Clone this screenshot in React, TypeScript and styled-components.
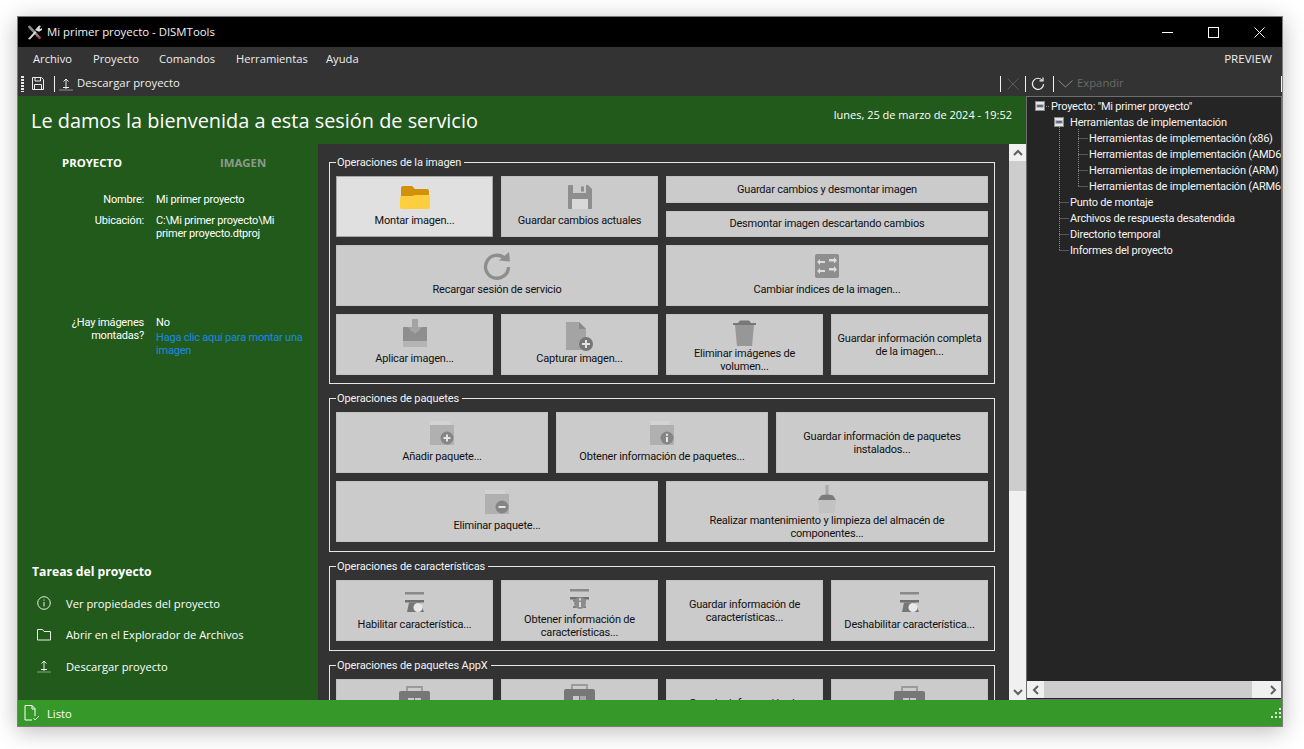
import styled, { createGlobalStyle } from "styled-components";
import { ReactNode } from "react";

const Global = createGlobalStyle`
  html, body {
    margin: 0;
    padding: 0;
    background: #ffffff;
    overflow: hidden;
  }
  * { box-sizing: border-box; }
`;

const UI_FONT = `"Open Sans", "Noto Sans", "Liberation Sans", sans-serif`;
const SMALL_FONT = `font-family: Roboto, "Liberation Sans", sans-serif; font-size: 11px; letter-spacing: -0.2px;`;

const Desktop = styled.div`
  width: 1304px;
  height: 749px;
  padding: 16px 21px 22px 17px;
  font-family: ${UI_FONT};
  font-size: 11.2px;
`;

const Window = styled.div`
  width: 1266px;
  height: 711px;
  border: 1px solid #7c7c7c;
  display: flex;
  flex-direction: column;
  box-shadow: 0 4px 22px rgba(0, 0, 0, 0.28);
  background: #333;
`;

const TitleBar = styled.div`
  height: 30px;
  background: #000;
  color: #f2f2f2;
  display: flex;
  align-items: center;
  padding-left: 9px;
  flex-shrink: 0;
`;

const WindowTitle = styled.span`
  margin: 0 0 2px 5px;
  flex: 1;
  font-size: 11.4px;
`;

const WindowButton = styled.div`
  width: 46px;
  height: 30px;
  display: flex;
  align-items: center;
  justify-content: center;
`;

const MenuBar = styled.div`
  height: 24px;
  background: #333;
  color: #eee;
  display: flex;
  align-items: center;
  padding: 0 10px 2px 15px;
  flex-shrink: 0;
`;

const MenuItem = styled.span<{ $w: number }>`
  width: ${(p) => p.$w}px;
`;

const Preview = styled.span`
  margin-left: auto;
  font-size: 11.6px;
`;

const ToolBar = styled.div`
  height: 25px;
  background: #333;
  color: #eee;
  display: flex;
  align-items: center;
  flex-shrink: 0;
`;

const ToolSection = styled.div<{ $w?: number }>`
  display: flex;
  align-items: center;
  padding-left: ${(p) => (p.$w ? 3 : 0)}px;
  width: ${(p) => (p.$w ? `${p.$w}px` : "auto")};
  flex: ${(p) => (p.$w ? "none" : 1)};
`;

const Grip = styled.div`
  width: 3px;
  height: 16px;
  background: repeating-linear-gradient(#e8e8e8 0 2px, transparent 2px 3px);
  margin-right: 8px;
`;

const ToolSep = styled.div<{ $l?: number; $r?: number }>`
  width: 1px;
  height: 16px;
  background: #f0f0f0;
  margin: 0 ${(p) => p.$r ?? 5}px 0 ${(p) => p.$l ?? 5}px;
`;

const ToolIcon = styled.div<{ $w?: number }>`
  display: flex;
  align-items: center;
  justify-content: center;
  width: ${(p) => p.$w ?? 14}px;
  height: 16px;
`;

const ToolText = styled.span<{ $off?: boolean }>`
  margin: 0 0 2px 4px;
  font-size: 11.3px;
  color: ${(p) => (p.$off ? "#6a6a6a" : "#eee")};
`;

const ToolSpring = styled.div`
  flex: 1;
`;

const Main = styled.div`
  flex: 1;
  display: flex;
  min-height: 0;
`;

const GreenArea = styled.div`
  width: 1008px;
  flex-shrink: 0;
  background: #215a1b;
  color: #fff;
  display: flex;
  flex-direction: column;
`;

const Header = styled.div`
  height: 48px;
  display: flex;
  justify-content: space-between;
  padding: 0 14px 0 13px;
  flex-shrink: 0;
`;

const Welcome = styled.h1`
  margin: 12px 0 0;
  font-size: 19.9px;
  font-weight: 400;
  line-height: 26px;
`;

const DateText = styled.div`
  margin-top: 11px;
  line-height: 15px;
  font-size: 11px;
`;

const Columns = styled.div`
  flex: 1;
  display: flex;
  min-height: 0;
`;

const LeftPane = styled.div`
  width: 300px;
  flex-shrink: 0;
  display: flex;
  flex-direction: column;
  padding-top: 11px;
`;

const Tabs = styled.div`
  display: flex;
  height: 15px;
  line-height: 15px;
  font-weight: 700;
  font-size: 11.4px;
`;

const Tab = styled.div<{ $off?: boolean; $w: number }>`
  width: ${(p) => p.$w}px;
  text-align: center;
  white-space: nowrap;
  color: ${(p) => (p.$off ? "#8d9a8a" : "#fff")};
  margin-left: ${(p) => (p.$off ? 98 : 44)}px;
`;

const InfoGrid = styled.div`
  ${SMALL_FONT}
  display: grid;
  grid-template-columns: 126px 164px;
  column-gap: 12px;
  line-height: 13px;
  margin-top: 23px;
`;

const InfoLabel = styled.div<{ $gap?: number }>`
  text-align: right;
  margin-top: ${(p) => p.$gap ?? 0}px;
`;

const InfoValue = styled.div<{ $gap?: number }>`
  margin-top: ${(p) => p.$gap ?? 0}px;
`;

const InfoLink = styled.a`
  display: block;
  color: #1e88e5;
  margin-top: 2px;
`;

const Tasks = styled.div`
  margin-top: auto;
  padding: 0 0 18px 14px;
`;

const TasksTitle = styled.div`
  font-weight: 700;
  font-size: 12.2px;
  line-height: 15px;
  margin-bottom: 9px;
`;

const TaskRow = styled.div`
  display: flex;
  align-items: center;
  height: 31.5px;
  padding-left: 5px;
`;

const TaskIcon = styled.div`
  width: 14px;
  height: 16px;
  display: flex;
  align-items: center;
  justify-content: center;
  margin-right: 15px;
`;

const ScrollPane = styled.div`
  flex: 1;
  background: #333;
  display: flex;
  min-width: 0;
`;

const OpsViewport = styled.div`
  ${SMALL_FONT}
  flex: 1;
  overflow: hidden;
  padding: 10px 14px 0 11px;
  min-width: 0;
  height: 556px;
`;

const OpsGroup = styled.fieldset`
  margin: 0 0 6px;
  padding: 6px 6px 9px 6px;
  border: 1px solid #e6e6e6;
  min-width: 0;
  color: #f2f2f2;

  &:first-child {
    padding-bottom: 8px;
  }
`;

const OpsLegend = styled.legend`
  margin-left: 0;
  padding: 0 3px 0 1px;
  line-height: 18px;
  height: 16px;
  letter-spacing: -0.1px;
`;

const ButtonGrid = styled.div`
  display: grid;
  grid-template-columns: repeat(12, 47px);
  grid-auto-rows: 26.5px;
  gap: 8px;
`;

const OpButton = styled.div<{ $span: number; $rows?: number; $hot?: boolean }>`
  grid-column: span ${(p) => p.$span};
  grid-row: span ${(p) => p.$rows ?? 2};
  background: ${(p) => (p.$hot ? "#e0e0e0" : "#cbcbcb")};
  border: 1px solid ${(p) => (p.$hot ? "#a6a6a6" : "#c2c2c2")};
  color: #111;
  display: flex;
  flex-direction: column;
  align-items: center;
  justify-content: center;
  overflow: hidden;
  text-align: center;
`;

const OpIcon = styled.div<{ $shift?: number }>`
  height: 40px;
  margin-bottom: -10px;
  flex-shrink: 0;
  display: flex;
  align-items: center;
  justify-content: center;
  transform: translateY(${(p) => p.$shift ?? 0}px);
`;

const OpLabel = styled.div<{ $multi: boolean; $plain: boolean }>`
  white-space: pre-line;
  line-height: 13px;
  padding: 0 2px;
  position: relative;
  ${(p) =>
    p.$plain
      ? ""
      : `flex: 1; display: flex; align-items: center; padding-bottom: ${p.$multi ? 0 : 3}px;`}
`;

const VScroll = styled.div`
  width: 17px;
  background: #f0f0f0;
  display: flex;
  flex-direction: column;
  flex-shrink: 0;
`;

const ScrollBtn = styled.div`
  height: 17px;
  display: flex;
  align-items: center;
  justify-content: center;
  flex-shrink: 0;
`;

const VThumb = styled.div`
  height: 330px;
  background: #cdcdcd;
`;

const VRest = styled.div`
  flex: 1;
`;

const TreePane = styled.div`
  ${SMALL_FONT}
  flex: 1;
  background: #252525;
  border: 1px solid #6e6e6e;
  color: #f4f4f4;
  display: flex;
  flex-direction: column;
  min-width: 0;
`;

const TreeBody = styled.div`
  position: relative;
  flex: 1;
  overflow: hidden;
  padding-top: 2px;
`;

const TreeRow = styled.div<{ $left: number }>`
  height: 16px;
  line-height: 16px;
  white-space: nowrap;
  padding-left: ${(p) => p.$left}px;
`;

const TreeLines = styled.svg`
  position: absolute;
  left: 0;
  top: 0;
`;

const HScroll = styled.div`
  height: 18px;
  background: #f0f0f0;
  border-bottom: 1px solid #252525;
  display: flex;
  align-items: stretch;
  flex-shrink: 0;
`;

const HBtn = styled.div`
  width: 17px;
  display: flex;
  align-items: center;
  justify-content: center;
  flex-shrink: 0;
`;

const HThumb = styled.div`
  width: 208px;
  background: #cdcdcd;
`;

const HRest = styled.div`
  flex: 1;
`;

const StatusBar = styled.div`
  height: 26px;
  background: #359829;
  color: #fff;
  display: flex;
  align-items: center;
  padding-left: 6px;
  flex-shrink: 0;
`;

const StatusText = styled.span`
  margin-left: 7px;
  flex: 1;
`;

/* ---- icons ---- */

const AppIcon = () => (
  <svg width="15" height="15" viewBox="0 0 15 15">
    <path d="M1 1l2-.5 11 12-1.500 1.800L1.500 3z" fill="#8a8a8a" />
    <path d="M1 14l7-8 1.500 1.500-6.500 7z" fill="#d9d9d9" />
    <path d="M10 10.500l4 2-1.500 1.800-3.500-3z" fill="#c8303a" />
    <path d="M8 5l4-4.500 2 .5-1.500 2 1 1 2-1.500-.5 2.500-3 1.800z" fill="#d9d9d9" />
  </svg>
);

const SaveIcon = () => (
  <svg width="12" height="13" viewBox="0 0 12 13" fill="none" stroke="#eee">
    <path d="M.5.500h9l2 2v10H.500z" />
    <path d="M3 .5v3.500h5.500V.5M2.500 12.500V7.500h7v5" />
  </svg>
);

const UploadIcon = () => (
  <svg width="14" height="14" viewBox="0 0 14 14" fill="none" stroke="#eee">
    <path d="M7 12V2.500" />
    <path d="M4.500 4.500L7 2l2.500 2.500" />
    <path d="M4 10.500h6" />
    <path d="M.5 13h13" strokeDasharray="1 1" />
  </svg>
);

const XIcon = () => (
  <svg width="12" height="12" viewBox="0 0 12 12" stroke="#5c5c5c" fill="none">
    <path d="M.5.500l11 11M11.500.500l-11 11" />
  </svg>
);

const RefreshIcon = () => (
  <svg width="14" height="14" viewBox="0 0 14 14" fill="none" stroke="#eee" strokeWidth="1.200">
    <path d="M11.500 3.500A5.600 5.600 0 1 0 12.600 7" />
    <path d="M8.500 3.800h3.500V.5" />
  </svg>
);

const ChevronThin = () => (
  <svg width="15" height="8" viewBox="0 0 15 8" fill="none" stroke="#8a8a8a">
    <path d="M.5.500L7.500 7 14.500.5" />
  </svg>
);

const InfoIcon = () => (
  <svg width="14" height="14" viewBox="0 0 14 14" fill="none" stroke="#e8efe6">
    <circle cx="7" cy="7" r="6.300" />
    <path d="M7 6v4.500M7 3.500v1.200" />
  </svg>
);

const FolderLine = () => (
  <svg width="14" height="12" viewBox="0 0 14 12" fill="none" stroke="#e8efe6">
    <path d="M.5 2V.5h5l1.500 2h6.500v8.500H.500z" />
  </svg>
);

const ListoIcon = () => (
  <svg width="16" height="16" viewBox="0 0 16 16" fill="none" stroke="#fff">
    <path d="M8 15H1V.5h7l3 3V11" />
    <path d="M8 .5V4h3" />
    <path d="M9.500 13l1.500 2 4-4" strokeWidth=".8" />
  </svg>
);

const Grabber = () => (
  <svg width="11" height="11" viewBox="0 0 11 11" fill="#dfe8dd">
    <rect x="8" y="0" width="2" height="2" />
    <rect x="8" y="4" width="2" height="2" />
    <rect x="4" y="4" width="2" height="2" />
    <rect x="8" y="8" width="2" height="2" />
    <rect x="4" y="8" width="2" height="2" />
    <rect x="0" y="8" width="2" height="2" />
  </svg>
);

const Arrow = ({ dir }: { dir: "up" | "down" | "left" | "right" }) => {
  const d = {
    up: "M1 6l4-4 4 4",
    down: "M1 2l4 4 4-4",
    left: "M6 1L2 5l4 4",
    right: "M2 1l4 4-4 4",
  }[dir];
  const w = dir === "up" || dir === "down" ? 10 : 8;
  const h = dir === "up" || dir === "down" ? 8 : 10;
  return (
    <svg width={w} height={h} viewBox={`0 0 ${w} ${h}`} fill="none" stroke="#606060" strokeWidth="2">
      <path d={d} />
    </svg>
  );
};

const GREY = "#8e8e8e";

const FolderOpen = () => (
  <svg width="30" height="24" viewBox="0 0 30 24">
    <path d="M1 3q0-2 2-2h9l3 3h12q2 0 2 2v6H1z" fill="#d1920a" />
    <path d="M0 13q0-2 2-2h10l3-1h13q2 0 2 2v10q0 2-2 2H2q-2 0-2-2z" fill="#fdcf3f" />
  </svg>
);

const FloppyBig = () => (
  <svg width="24" height="24" viewBox="0 0 24 24">
    <path d="M0 1q0-1 1-1h19l4 4v19q0 1-1 1H1q-1 0-1-1z" fill={GREY} />
    <rect x="5" y="0" width="13" height="8" fill="#cbcbcb" />
    <rect x="13" y="1.500" width="3" height="5" fill={GREY} />
    <rect x="4" y="14" width="16" height="10" fill="#d8d8d8" />
  </svg>
);

const ReloadBig = () => (
  <svg width="28" height="28" viewBox="0 0 28 28" fill="none">
    <path d="M22 6.500A11.500 11.500 0 1 0 25.500 15" stroke={GREY} strokeWidth="3.400" />
    <path d="M16 8.500L27 9.500 26 0z" fill={GREY} />
  </svg>
);

const SwapBig = () => (
  <svg width="24" height="24" viewBox="0 0 24 24">
    <rect width="24" height="24" rx="2" fill={GREY} />
    <g fill="#dcdcdc">
      <path d="M14 5h5V3l3 3.500-3 3V7.500h-5z" />
      <path d="M10 9H5v2L2 8l3-3v2h5z" />
      <path d="M14 14h5v-2l3 3.500-3 3v-2h-5z" />
      <path d="M10 18H5v2l-3-3 3-3v2h5z" />
    </g>
  </svg>
);

const ApplyBig = () => (
  <svg width="24" height="28" viewBox="0 0 24 28">
    <path d="M0 8h8v4h8V8h8v14H0z" fill={GREY} />
    <rect y="22" width="24" height="6" rx="1" fill="#b4b4b4" />
    <path d="M9 0h6v8h4l-7 7-7-7h4z" fill="#a3a3a3" />
  </svg>
);

const CaptureBig = () => (
  <svg width="27" height="29" viewBox="0 0 27 29">
    <path d="M0 0h13l7 7v21H0z" fill="#a4a4a4" />
    <path d="M13 0l7 7h-7z" fill="#8a8a8a" />
    <circle cx="20" cy="22" r="7" fill="#777" />
    <path d="M20 18v8M16 22h8" stroke="#e4e4e4" strokeWidth="2" />
  </svg>
);

const TrashBig = () => (
  <svg width="23" height="26" viewBox="0 0 23 26">
    <path d="M0 3h23v2H0z" fill="#777" />
    <path d="M7 0.500h9l2 2.500H5z" fill="#777" />
    <path d="M2 5h19l-2 21H4z" fill="#979797" />
  </svg>
);

const Package = ({ mark }: { mark: "plus" | "info" | "minus" }) => (
  <svg width="24" height="24" viewBox="0 0 24 24">
    <rect y="0" width="20" height="4" fill="#d2d2d2" />
    <rect y="4" width="24" height="20" fill="#b0b0b0" />
    <circle cx="17" cy="17" r="6.500" fill="#858585" />
    {mark === "plus" && <path d="M17 13.500v7M13.500 17h7" stroke="#e4e4e4" strokeWidth="2" />}
    {mark === "minus" && <path d="M13.500 17h7" stroke="#e4e4e4" strokeWidth="2" />}
    {mark === "info" && <path d="M17 16v5M17 12.800v2" stroke="#e4e4e4" strokeWidth="2" />}
  </svg>
);

const Broom = () => (
  <svg width="20" height="28" viewBox="0 0 20 28">
    <rect x="8.500" y="0" width="3" height="10" fill="#a8a8a8" />
    <path d="M4 10.500q6-2 12 0l3 4.500H1z" fill="#7c7c7c" />
    <path d="M1 15h18l-1 13H2z" fill="#c2c2c2" />
  </svg>
);

const Feature = ({ info }: { info?: boolean }) => (
  <svg width="20" height="22" viewBox="0 0 20 22">
    <rect y="1" width="19" height="2.500" fill="#8a8a8a" />
    <rect y="9" width="19" height="2.500" fill="#707070" />
    {info ? (
      <>
        <path d="M3 11.500h13v2H3zM3 18h13v2H3z" fill="#808080" />
        <circle cx="10" cy="15" r="6" fill="#8c8c8c" />
        <path d="M10 14v5M10 10.500v2" stroke="#e2e2e2" strokeWidth="1.800" />
      </>
    ) : (
      <>
        <path d="M2 21l2-9.500h11l4 9.500z" fill="#777" />
        <circle cx="13" cy="16.500" r="4.500" fill="#e8e8e8" />
      </>
    )}
  </svg>
);

const Briefcase = ({ store }: { store?: boolean }) => (
  <svg width="31" height="28" viewBox="0 0 31 28">
    <path d="M8 6V1h15v5" fill="none" stroke="#9a9a9a" strokeWidth="1.800" />
    <rect y="5" width="31" height="23" rx="2" fill="#777" />
    <rect x="9" y="12" width="6" height="8" fill="#c8c8c8" />
    <rect x="16" y="12" width="6" height="8" fill={store ? "#a8a8a8" : "#c8c8c8"} />
  </svg>
);

/* ---- data ---- */

interface Op {
  label: string;
  span: number;
  rows?: number;
  hot?: boolean;
  icon?: ReactNode;
  shift?: number;
}

const groups: { title: string; ops: Op[] }[] = [
  {
    title: "Operaciones de la imagen",
    ops: [
      { label: "Montar imagen...", span: 3, hot: true, icon: <FolderOpen /> },
      { label: "Guardar cambios actuales", span: 3, icon: <FloppyBig /> },
      { label: "Guardar cambios y desmontar imagen", span: 6, rows: 1 },
      { label: "Desmontar imagen descartando cambios", span: 6, rows: 1 },
      { label: "Recargar sesión de servicio", span: 6, icon: <ReloadBig /> },
      { label: "Cambiar índices de la imagen...", span: 6, icon: <SwapBig /> },
      { label: "Aplicar imagen...", span: 3, icon: <ApplyBig />, shift: -2 },
      { label: "Capturar imagen...", span: 3, icon: <CaptureBig />, shift: 1 },
      { label: "Eliminar imágenes de\nvolumen...", span: 3, icon: <TrashBig />, shift: -2 },
      { label: "Guardar información completa\nde la imagen...", span: 3 },
    ],
  },
  {
    title: "Operaciones de paquetes",
    ops: [
      { label: "Añadir paquete...", span: 4, icon: <Package mark="plus" /> },
      { label: "Obtener información de paquetes...", span: 4, icon: <Package mark="info" /> },
      { label: "Guardar información de paquetes\ninstalados...", span: 4 },
      { label: "Eliminar paquete...", span: 6, icon: <Package mark="minus" /> },
      {
        label: "Realizar mantenimiento y limpieza del almacén de\ncomponentes...",
        span: 6,
        icon: <Broom />,
        shift: -3,
      },
    ],
  },
  {
    title: "Operaciones de características",
    ops: [
      { label: "Habilitar característica...", span: 3, icon: <Feature />, shift: 1 },
      { label: "Obtener información de\ncaracterísticas...", span: 3, icon: <Feature info />, shift: -2 },
      { label: "Guardar información de\ncaracterísticas...", span: 3 },
      { label: "Deshabilitar característica...", span: 3, icon: <Feature />, shift: 1 },
    ],
  },
  {
    title: "Operaciones de paquetes AppX",
    ops: [
      { label: "", span: 3, icon: <Briefcase /> },
      { label: "", span: 3, icon: <Briefcase store />, shift: -2 },
      { label: "Guardar información de\npaquetes AppX...", span: 3 },
      { label: "", span: 3, icon: <Briefcase /> },
    ],
  },
];

const menus: [string, number][] = [
  ["Archivo", 60],
  ["Proyecto", 66],
  ["Comandos", 77],
  ["Herramientas", 90],
  ["Ayuda", 50],
];

const tree: [string, number][] = [
  ['Proyecto: "Mi primer proyecto"', 24],
  ["Herramientas de implementación", 43],
  ["Herramientas de implementación (x86)", 62],
  ["Herramientas de implementación (AMD64)", 62],
  ["Herramientas de implementación (ARM)", 62],
  ["Herramientas de implementación (ARM64)", 62],
  ["Punto de montaje", 43],
  ["Archivos de respuesta desatendida", 43],
  ["Directorio temporal", 43],
  ["Informes del proyecto", 43],
];

const ExpandBox = ({ x, y }: { x: number; y: number }) => (
  <>
    <rect x={x + 0.5} y={y + 0.5} width="9" height="9" fill="#e6e6e6" stroke="#8a8a8a" />
    <rect x={x + 2} y={y + 4} width="6" height="2" fill="#2a3f9a" />
  </>
);

const App = () => {
  return (
    <Desktop>
      <Global />
      <Window>
        <TitleBar>
          <AppIcon />
          <WindowTitle>Mi primer proyecto - DISMTools</WindowTitle>
          <WindowButton>
            <svg width="11" height="1"><rect width="11" height="1" fill="#fff" /></svg>
          </WindowButton>
          <WindowButton>
            <svg width="11" height="11" fill="none" stroke="#fff"><rect x=".5" y=".5" width="10" height="10" /></svg>
          </WindowButton>
          <WindowButton>
            <svg width="11" height="11" stroke="#fff"><path d="M.5.500l10 10M10.500.500l-10 10" /></svg>
          </WindowButton>
        </TitleBar>
        <MenuBar>
          {menus.map(([m, w]) => (
            <MenuItem key={m} $w={w}>{m}</MenuItem>
          ))}
          <Preview>PREVIEW</Preview>
        </MenuBar>
        <ToolBar>
          <ToolSection $w={1013}>
            <Grip />
            <ToolIcon $w={12}><SaveIcon /></ToolIcon>
            <ToolSep $l={10} $r={4} />
            <ToolIcon><UploadIcon /></ToolIcon>
            <ToolText>Descargar proyecto</ToolText>
            <ToolSpring />
            <ToolSep />
            <ToolIcon><XIcon /></ToolIcon>
            <ToolSep />
          </ToolSection>
          <ToolSection>
            <ToolIcon><RefreshIcon /></ToolIcon>
            <ToolSep $l={8} $r={4} />
            <ToolIcon $w={15}><ChevronThin /></ToolIcon>
            <ToolText $off>Expandir</ToolText>
            <ToolSpring />
            <ToolSep $l={0} $r={0} />
          </ToolSection>
        </ToolBar>
        <Main>
          <GreenArea>
            <Header>
              <Welcome>Le damos la bienvenida a esta sesión de servicio</Welcome>
              <DateText>lunes, 25 de marzo de 2024 - 19:52</DateText>
            </Header>
            <Columns>
              <LeftPane>
                <Tabs>
                  <Tab $w={60}>PROYECTO</Tab>
                  <Tab $off $w={46}>IMAGEN</Tab>
                </Tabs>
                <InfoGrid>
                  <InfoLabel>Nombre:</InfoLabel>
                  <InfoValue>Mi primer proyecto</InfoValue>
                  <InfoLabel $gap={8}>Ubicación:</InfoLabel>
                  <InfoValue $gap={8}>C:\Mi primer proyecto\Mi<br />primer proyecto.dtproj</InfoValue>
                  <InfoLabel $gap={76}>¿Hay imágenes<br />montadas?</InfoLabel>
                  <InfoValue $gap={76}>
                    No
                    <InfoLink>Haga clic aquí para montar una imagen</InfoLink>
                  </InfoValue>
                </InfoGrid>
                <Tasks>
                  <TasksTitle>Tareas del proyecto</TasksTitle>
                  <TaskRow><TaskIcon><InfoIcon /></TaskIcon>Ver propiedades del proyecto</TaskRow>
                  <TaskRow><TaskIcon><FolderLine /></TaskIcon>Abrir en el Explorador de Archivos</TaskRow>
                  <TaskRow><TaskIcon><UploadIcon /></TaskIcon>Descargar proyecto</TaskRow>
                </Tasks>
              </LeftPane>
              <ScrollPane>
                <OpsViewport>
                  {groups.map((g) => (
                    <OpsGroup key={g.title}>
                      <OpsLegend>{g.title}</OpsLegend>
                      <ButtonGrid>
                        {g.ops.map((op, i) => (
                          <OpButton key={i} $span={op.span} $rows={op.rows} $hot={op.hot}>
                            {op.icon && <OpIcon $shift={op.shift}>{op.icon}</OpIcon>}
                            <OpLabel $multi={op.label.includes("\n")} $plain={!op.icon}>
                              {op.label}
                            </OpLabel>
                          </OpButton>
                        ))}
                      </ButtonGrid>
                    </OpsGroup>
                  ))}
                </OpsViewport>
                <VScroll>
                  <ScrollBtn><Arrow dir="up" /></ScrollBtn>
                  <VThumb />
                  <VRest />
                  <ScrollBtn><Arrow dir="down" /></ScrollBtn>
                </VScroll>
              </ScrollPane>
            </Columns>
          </GreenArea>
          <TreePane>
            <TreeBody>
              {tree.map(([t, left]) => (
                <TreeRow key={t} $left={left}>{t}</TreeRow>
              ))}
              <TreeLines width="254" height="180" fill="none" stroke="#8c8c8c" strokeDasharray="1 1">
                <path d="M19 9.500h3.500M32.500 25.500h4M32.500 30v123.500M32.500 105.500h9M32.500 121.500h9M32.500 137.500h9M32.500 153.500h9M51.500 32v57.500M51.500 41.500h9M51.500 57.500h9M51.500 73.500h9M51.500 89.500h9" />
                <g strokeDasharray="none">
                  <ExpandBox x={8} y={4} />
                  <ExpandBox x={27} y={20} />
                </g>
              </TreeLines>
            </TreeBody>
            <HScroll>
              <HBtn><Arrow dir="left" /></HBtn>
              <HThumb />
              <HRest />
              <HBtn><Arrow dir="right" /></HBtn>
            </HScroll>
          </TreePane>
        </Main>
        <StatusBar>
          <ListoIcon />
          <StatusText>Listo</StatusText>
          <Grabber />
        </StatusBar>
      </Window>
    </Desktop>
  );
};

export default App;
